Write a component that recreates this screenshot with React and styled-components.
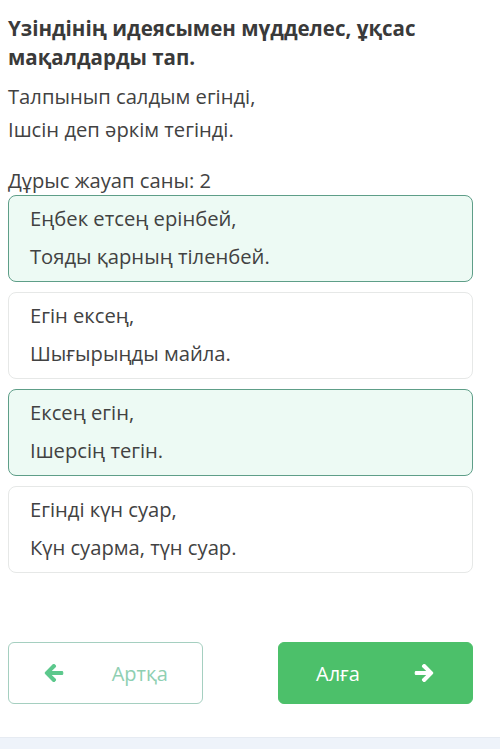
import React from "react";
import styled, { createGlobalStyle } from "styled-components";
import { FaArrowLeft, FaArrowRight } from "react-icons/fa";

const GlobalStyle = createGlobalStyle`
  html, body {
    margin: 0;
    padding: 0;
    background: #ffffff;
  }
  body {
    font-family: "Open Sans", "Noto Sans", sans-serif;
    color: #3d3d3d;
  }
`;

// Весь экран задания
const Page = styled.div`
  width: 500px;
  height: 749px;
  display: flex;
  flex-direction: column;
  background: #fff;
  overflow: hidden;
`;

const Content = styled.div`
  flex: 1;
  display: flex;
  flex-direction: column;
  padding: 14px 27px 0 8px;
`;

const Title = styled.h1`
  margin: 0;
  font-size: 20.5px;
  line-height: 29px;
  font-weight: 700;
  color: #3a3a3a;
`;

const Verse = styled.div`
  margin-top: 8px;
  font-size: 20.2px;
  line-height: 33px;
  color: #424242;
`;

const Count = styled.div`
  margin-top: 21px;
  font-size: 20.2px;
  line-height: 26px;
  color: #424242;
  margin-bottom: 2px;
`;

const Options = styled.div`
  display: flex;
  flex-direction: column;
  gap: 10px;
`;

// Вариант ответа, выбранный подсвечивается зелёным
const Option = styled.div`
  height: 87px;
  box-sizing: border-box;
  padding: 3px 21px 0;
  border-radius: 8px;
  border: 1.5px solid ${({ selected }) => (selected ? "#5e9e88" : "#e6e8e7")};
  background: ${({ selected }) => (selected ? "#edfaf4" : "#ffffff")};
  font-size: 20.2px;
  line-height: 38px;
  color: #424242;
`;

const Footer = styled.div`
  display: flex;
  justify-content: space-between;
  padding: 0 27px 33px 8px;
`;

const NavButton = styled.button`
  width: 195px;
  height: 62px;
  box-sizing: border-box;
  border-radius: 6px;
  display: flex;
  align-items: center;
  justify-content: space-between;
  padding: ${({ primary }) => (primary ? "0 38px 0 37px" : "0 34px 0 35px")};
  font-family: "Open Sans", "Noto Sans", sans-serif;
  font-size: 20px;
  cursor: pointer;
  border: 1.5px solid ${({ primary }) => (primary ? "#4cc06a" : "#a5cfc0")};
  background: ${({ primary }) => (primary ? "#4cc06a" : "#ffffff")};
  color: ${({ primary }) => (primary ? "#ffffff" : "#8fcfb2")};

  svg {
    width: 20px;
    height: 20px;
    color: ${({ primary }) => (primary ? "#ffffff" : "#5cc88c")};
    stroke: currentColor;
    stroke-width: 28px;
    stroke-linejoin: round;
  }
`;

const ButtonText = styled.span`
  flex: 1;
  text-align: ${({ align }) => align};
`;

const BottomStrip = styled.div`
  height: 11px;
  background: #eef3fa;
  border-top: 1px solid #e6ebf2;
`;

const options = [
  { lines: ["Еңбек етсең ерінбей,", "Тояды қарның тіленбей."], selected: true },
  { lines: ["Егін ексең,", "Шығырыңды майла."], selected: false },
  { lines: ["Ексең егін,", "Ішерсің тегін."], selected: true },
  { lines: ["Егінді күн суар,", "Күн суарма, түн суар."], selected: false },
];

export default function App() {
  return (
    <Page>
      <GlobalStyle />
      <Content>
        <Title>
          Үзіндінің идеясымен мүдделес, ұқсас
          <br />
          мақалдарды тап.
        </Title>
        <Verse>
          Талпынып салдым егінді,
          <br />
          Ішсін деп әркім тегінді.
        </Verse>
        <Count>Дұрыс жауап саны: 2</Count>
        <Options>
          {options.map((o, i) => (
            <Option key={i} selected={o.selected}>
              {o.lines[0]}
              <br />
              {o.lines[1]}
            </Option>
          ))}
        </Options>
      </Content>
      <Footer>
        <NavButton>
          <FaArrowLeft />
          <ButtonText align="right">Артқа</ButtonText>
        </NavButton>
        <NavButton primary>
          <ButtonText align="left">Алға</ButtonText>
          <FaArrowRight />
        </NavButton>
      </Footer>
      <BottomStrip />
    </Page>
  );
}
